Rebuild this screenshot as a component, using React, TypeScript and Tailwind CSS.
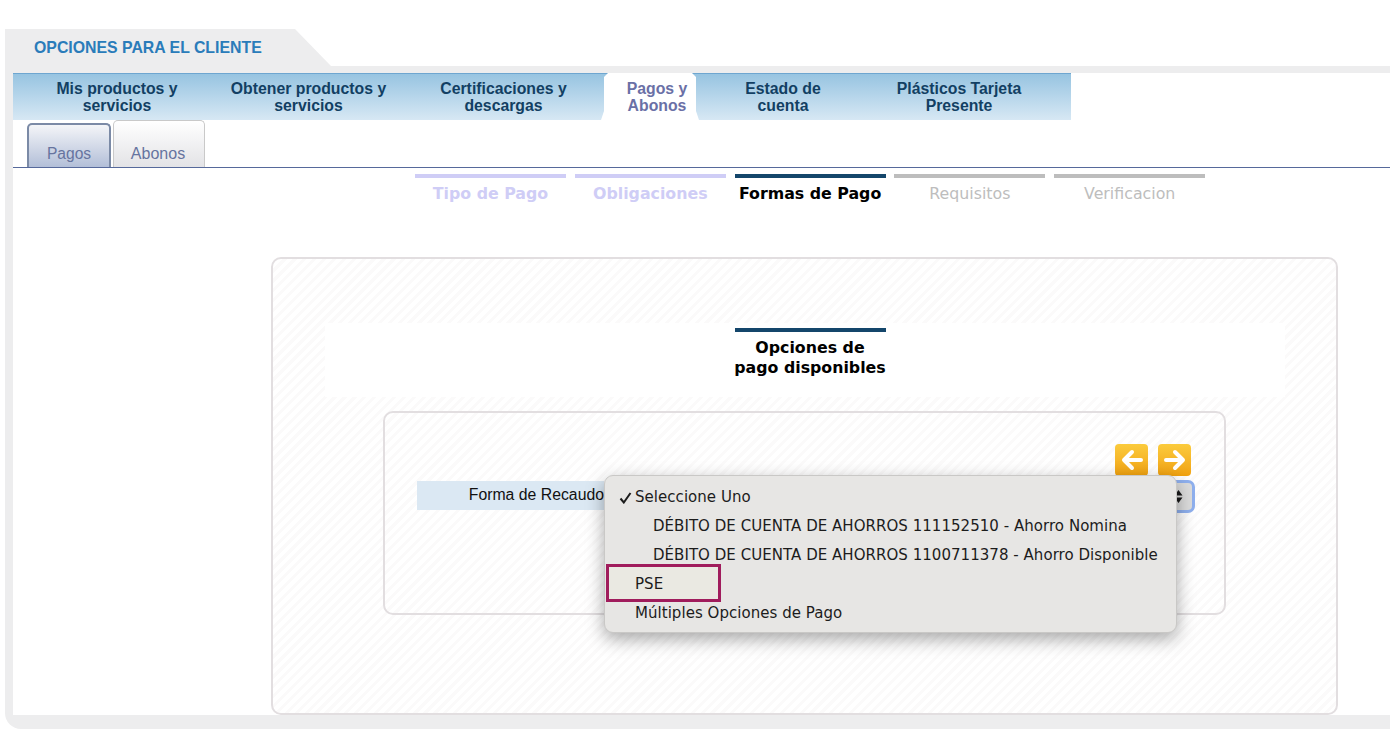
const navItems = [
  { label: ["Mis productos y", "servicios"], width: "w-[208px]" },
  { label: ["Obtener productos y", "servicios"], width: "w-[175px]" },
  { label: ["Certificaciones y", "descargas"], width: "w-[201px] ml-[7px]" },
];

const navItemsRight = [
  { label: ["Estado de", "cuenta"], width: "w-[174px]" },
  { label: ["Plásticos Tarjeta", "Presente"], width: "w-[178px]" },
];

const steps = [
  { label: "Tipo de Pago", bar: "bg-[#cfcdf6]", text: "text-[#cfcdf6] font-bold" },
  { label: "Obligaciones", bar: "bg-[#cfcdf6]", text: "text-[#cfcdf6] font-bold" },
  { label: "Formas de Pago", bar: "bg-[#14466b]", text: "text-black font-bold" },
  { label: "Requisitos", bar: "bg-[#bdbdbd]", text: "text-[#bdbdbd]" },
  { label: "Verificacion", bar: "bg-[#bdbdbd]", text: "text-[#bdbdbd]" },
];

const stripes =
  "bg-[repeating-linear-gradient(135deg,#fbfafa_0px,#fbfafa_3px,#ffffff_3px,#ffffff_7px)]";

function NavItem({ label, width }: { label: string[]; width: string }) {
  return (
    <div className={`${width} pt-[6px] text-center text-[15.8px] leading-[17px] font-bold text-[#123f63]`}>
      {label[0]}
      <br />
      {label[1]}
    </div>
  );
}

function ArrowButton({ direction }: { direction: "left" | "right" }) {
  return (
    <div className="flex h-[32px] w-[33px] items-center justify-center rounded-[4px] bg-gradient-to-b from-[#fbcb3c] to-[#f1a20d]">
      <svg width="26" height="24" viewBox="0 0 26 24" fill="none" stroke="white" strokeWidth="4" strokeLinecap="round" strokeLinejoin="round">
        {direction === "left" ? (
          <path d="M22 12H5M13 4l-8 8 8 8" />
        ) : (
          <path d="M4 12h17M13 4l8 8-8 8" />
        )}
      </svg>
    </div>
  );
}

export default function App() {
  return (
    <div className="h-[747px] w-[1390px] overflow-hidden bg-white pt-[29px] pl-[5px] font-['Liberation_Sans',sans-serif]">
      <div className="h-[37px] w-[326px] bg-[#ededee] pt-[10px] pl-[29px] text-[15.85px] leading-[18px] font-bold text-[#2a7cba] [clip-path:polygon(0_0,290px_0,326px_37px,0_37px)]">
        OPCIONES PARA EL CLIENTE
      </div>

      <div className="h-[663px] rounded-bl-[16px] bg-[#ededee] pt-[7px] pb-[14px] pl-[8px]">
        <div className="h-full bg-white">
          {/* main nav */}
          <div className="flex h-[47px] w-[1058px] border-t border-[#6ea6d0] bg-gradient-to-b from-[#97c4e1] to-[#d7e8f4]">
            {navItems.map((item) => (
              <NavItem key={item.label[0]} {...item} />
            ))}
            <div className="-mx-[3px] -mt-[1px] h-[47px] w-[98px] bg-white pt-[7px] pl-[14px] text-center text-[15.8px] leading-[17px] font-bold text-[#6a70a6] [clip-path:polygon(3px_4px,7px_0,91px_0,95px_4px,95px_38px,98px_47px,0_47px,3px_38px)]">
              Pagos y
              <br />
              Abonos
            </div>
            {navItemsRight.map((item) => (
              <NavItem key={item.label[0]} {...item} />
            ))}
          </div>

          {/* sub tabs */}
          <div className="flex h-[48px] items-end gap-[2px] border-b border-[#56699b] pl-[14px]">
            <div className="flex h-[44px] w-[84px] items-end justify-center rounded-t-[5px] border-2 border-b-0 border-[#7b8aa6] bg-gradient-to-b from-[#f4f5f8] to-[#b3bfd8] pb-[4px] text-[15.6px] leading-[18px] text-[#66749f]">
              Pagos
            </div>
            <div className="flex h-[47px] w-[92px] items-end justify-center rounded-t-[5px] border border-b-0 border-[#c9c9c9] bg-gradient-to-b from-white to-[#e3e3e6] pr-[2px] pb-[4px] text-[16px] leading-[18px] text-[#66749f]">
              Abonos
            </div>
          </div>

          {/* steps */}
          <div className="mt-[6px] ml-[402px] flex gap-[8.8px] font-['DejaVu_Sans',sans-serif]">
            {steps.map((step) => (
              <div key={step.label} className="w-[151px] text-center">
                <div className={`h-[4px] ${step.bar}`} />
                <div className={`mt-[6px] text-[15.8px] leading-[20px] ${step.text}`}>{step.label}</div>
              </div>
            ))}
          </div>

          {/* outer panel */}
          <div className={`mt-[53px] ml-[258px] h-[458px] w-[1067px] rounded-[10px] border-2 border-[#e2dee0] pt-[64px] ${stripes}`}>
            <div className="ml-[52px] flex h-[74px] w-[960px] flex-col items-center bg-white pt-[5px] pl-[10px] font-['DejaVu_Sans',sans-serif]">
              <div className="h-[4px] w-[151px] bg-[#14466b]" />
              <div className="mt-[6px] text-center text-[15.8px] leading-[20px] font-bold text-black">
                Opciones de
                <br />
                pago disponibles
              </div>
            </div>

            {/* inner panel */}
            <div className={`relative mt-[14px] ml-[110px] h-[204px] w-[843px] rounded-[10px] border-2 border-[#e2dee0] pt-[31px] ${stripes}`}>
              <div className="flex justify-end gap-[10px] pr-[33px]">
                <ArrowButton direction="left" />
                <ArrowButton direction="right" />
              </div>

              <div className="mt-[5px] ml-[32px] flex h-[33px] items-start">
                <div className="h-[29px] w-[187px] bg-[#dbe8f3] text-right text-[15.8px] leading-[28px] text-[#111]">
                  Forma de Recaudo
                </div>
                <div className="-mt-[1px] flex h-[33px] w-[591px] items-center justify-end rounded-[7px] border-[3px] border-[#8fb0ee] bg-[#dcdcdc] pr-[9px]">
                  <svg width="9" height="15" viewBox="0 0 9 15" fill="#1a1a1a">
                    <path d="M4.5 1 8.5 6.5H.5zM4.5 14 .5 8.5h8z" />
                  </svg>
                </div>
              </div>

              {/* dropdown menu */}
              <div className="absolute top-[62px] left-[219px] h-[158px] w-[573px] rounded-[9px] border border-[#c9c8c6] bg-[#e7e6e4] pt-[7px] font-['DejaVu_Sans',sans-serif] text-[15px] leading-[29px] tracking-[0.04px] text-[#1c1c1c] shadow-[0_6px_18px_rgba(0,0,0,0.35)]">
                <div className="absolute top-[88px] left-[1px] h-[38px] w-[115px] border-[3px] border-[#a01c5c] bg-[#eae9e2]" />
                <div className="relative pl-[30px]">
                  <svg className="absolute top-[9px] left-[14px]" width="13" height="12" viewBox="0 0 13 12" fill="none" stroke="#1c1c1c" strokeWidth="2">
                    <path d="M1.5 6.5 4.8 10.5 11.5 1" />
                  </svg>
                  Seleccione Uno
                </div>
                <div className="pl-[48px]">DÉBITO DE CUENTA DE AHORROS 111152510 - Ahorro Nomina</div>
                <div className="pl-[48px]">DÉBITO DE CUENTA DE AHORROS 1100711378 - Ahorro Disponible</div>
                <div className="relative pl-[30px]">PSE</div>
                <div className="pl-[30px]">Múltiples Opciones de Pago</div>
              </div>
            </div>
          </div>
        </div>
      </div>
    </div>
  );
}
